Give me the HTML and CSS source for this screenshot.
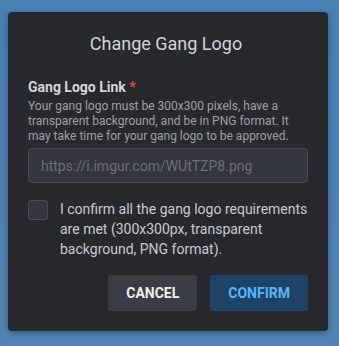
FILE: index.html
```html
<!DOCTYPE html>
<html lang="en">
  <head>
    <meta charset="UTF-8" />
    <meta name="viewport" content="width=device-width, initial-scale=1.0" />
    <title>Change Gang Logo</title>
    <link rel="stylesheet" href="styles.css">
  </head>

  <body>
    <div class="dialog">
      <h2 class="title">Change Gang Logo</h2>

      <label class="field-label" for="logo">Gang Logo Link <span class="req">*</span></label>
      <p class="hint">Your gang logo must be 300x300 pixels, have a transparent background, and be in PNG format. It may take time for your gang logo to be approved.</p>
      <input id="logo" class="input" type="text" placeholder="https://i.imgur.com/WUtTZP8.png">

      <label class="check">
        <span class="box"></span>
        <span class="check-text">I confirm all the gang logo requirements are met (300x300px, transparent background, PNG format).</span>
      </label>

      <div class="actions">
        <button class="btn cancel">Cancel</button>
        <button class="btn confirm">Confirm</button>
      </div>
    </div>
  </body>
</html>
```

FILE: styles.css
```css
*{
  padding: 0;
  margin: 0;
  box-sizing: border-box;
}
body {
  width: 100vw;
  height: 100vh;
  padding: 12px 0 0 8px;
  font-family: Roboto, "Liberation Sans", sans-serif;
  background: linear-gradient(180deg, #4a7fb4 0%, #5283b0 100%);
}
.dialog {
  width: 320px;
  padding: 20px 20px 20px;
  display: flex;
  flex-direction: column;
  background-color: #28292e;
  border-radius: 4px;
  box-shadow: 0 2px 6px rgba(0, 0, 0, 0.3);
}
.title {
  font-size: 18px;
  line-height: 24px;
  font-weight: 400;
  color: #d2d3d7;
  text-align: center;
  padding-right: 4px;
  margin-bottom: 22px;
}
.field-label {
  font-size: 14px;
  line-height: 18px;
  font-weight: 700;
  color: #d4d5d9;
  margin-bottom: 3px;
}
.req {
  color: #f2404f;
}
.hint {
  font-size: 12px;
  line-height: 15px;
  color: #9fa0a6;
  margin-bottom: 4px;
}
.input {
  height: 35px;
  padding: 0 12px;
  font-family: inherit;
  font-size: 14px;
  color: #d4d5d9;
  background-color: #34363e;
  border: 1px solid #474a55;
  border-radius: 4px;
  outline: none;
}
.input::placeholder {
  color: #6b6e79;
}
.check {
  display: flex;
  align-items: flex-start;
  gap: 12px;
  margin-top: 17px;
}
.box {
  flex: none;
  width: 20px;
  height: 20px;
  background-color: #34363e;
  border: 1px solid #4a4d58;
  border-radius: 3px;
}
.check-text {
  font-size: 14px;
  line-height: 20px;
  color: #c9cacf;
  margin-top: -1px;
}
.actions {
  display: flex;
  justify-content: flex-end;
  gap: 13px;
  margin-top: 16px;
}
.btn {
  height: 36px;
  padding: 0 18px;
  border: none;
  border-radius: 3px;
  font-family: inherit;
  font-size: 14px;
  font-weight: 700;
  text-transform: uppercase;
  cursor: pointer;
}
.cancel {
  background-color: #3a3c46;
  color: #eeeef0;
}
.confirm {
  background-color: #1f4367;
  color: #55b6f6;
}
```
